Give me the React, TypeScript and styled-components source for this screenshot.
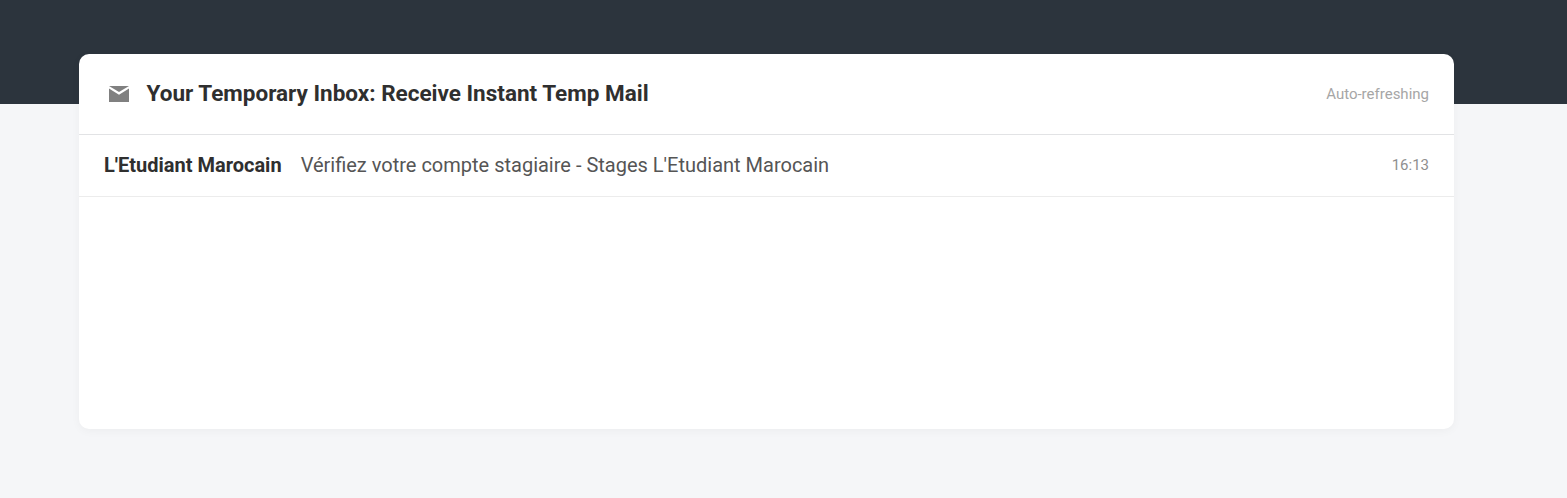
import React from "react";
import styled, { createGlobalStyle } from "styled-components";

const GlobalStyle = createGlobalStyle`
  html, body {
    margin: 0;
    padding: 0;
    background: #f5f6f8;
    font-family: Roboto, "Liberation Sans", sans-serif;
  }
`;

function App() {
  return (
    <Page>
      <GlobalStyle />
      <Hero />
      <Card>
        <CardHeader>
          <MailIcon viewBox="0 0 20 16" aria-hidden="true">
            <path d="M0 0h20L10 6z" />
            <path d="M0 2.6 10 8.8l10-6.2V16H0z" />
          </MailIcon>
          <Title>Your Temporary Inbox: Receive Instant Temp Mail</Title>
          <Status>Auto-refreshing</Status>
        </CardHeader>
        <MessageRow>
          <Sender>L'Etudiant Marocain</Sender>
          <Subject>Vérifiez votre compte stagiaire - Stages L'Etudiant Marocain</Subject>
          <Time>16:13</Time>
        </MessageRow>
      </Card>
    </Page>
  );
}

const Page = styled.div`
  width: 100%;
  height: 498px;
  overflow: hidden;
`;

const Hero = styled.div`
  height: 104px;
  background: #2c343d;
`;

const Card = styled.main`
  box-sizing: border-box;
  width: 1375px;
  height: 375px;
  margin: -50px 0 0 79px;
  background: #fff;
  border-radius: 10px;
  box-shadow: 0 2px 10px rgba(0, 0, 0, 0.04);
  overflow: hidden;
`;

const CardHeader = styled.header`
  box-sizing: border-box;
  display: flex;
  align-items: center;
  height: 81px;
  padding: 0 25px 0 30px;
  border-bottom: 1px solid #e2e3e5;
`;

const MailIcon = styled.svg`
  width: 20px;
  height: 16px;
  margin-right: 17.5px;
  flex: none;
  fill: #808080;
`;

const Title = styled.h1`
  margin: 0 0 3px;
  flex: 1;
  font-size: 22.5px;
  font-weight: 700;
  color: #2f2f2f;
`;

const Status = styled.span`
  font-size: 15px;
  color: #a6a6a6;
`;

const MessageRow = styled.div`
  box-sizing: border-box;
  display: flex;
  align-items: center;
  height: 62px;
  padding: 0 25px 2px;
  border-bottom: 1px solid #ececec;
`;

const Sender = styled.span`
  font-size: 20px;
  font-weight: 700;
  color: #2f2f2f;
  margin-right: 19px;
`;

const Subject = styled.span`
  flex: 1;
  font-size: 20px;
  color: #555;
`;

const Time = styled.span`
  font-size: 15px;
  color: #8f8f8f;
`;

export default App;
